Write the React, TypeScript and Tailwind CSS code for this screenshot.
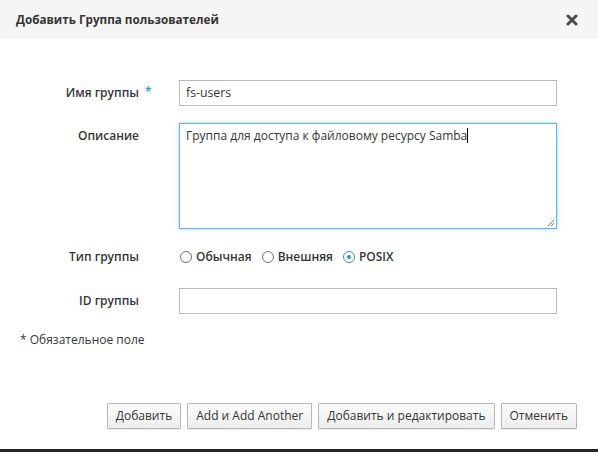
import React from "react";

const font = { fontFamily: '"Open Sans", "Noto Sans", sans-serif' };

function Radio({ checked, label }: { checked?: boolean; label: string }) {
  return (
    <div className="flex items-center gap-[4px]">
      <span
        className={
          "w-[12px] h-[12px] rounded-full border-[1.5px] flex items-center justify-center bg-white " +
          (checked ? "border-[#3a8fc8]" : "border-[#707070]")
        }
      >
        {checked && <span className="w-[4px] h-[4px] rounded-full bg-[#3a8fc8]" />}
      </span>
      <span className="text-[12px] font-semibold text-[#363636]">{label}</span>
    </div>
  );
}

function Btn({ children }: { children: React.ReactNode }) {
  return (
    <button className="h-[26px] px-[8px] border border-[#b7b7b7] bg-gradient-to-b from-[#fafafa] to-[#ededed] text-[12px] text-[#363636] rounded-[1px] shadow-[0_1px_1px_rgba(0,0,0,0.08)]">
      {children}
    </button>
  );
}

export default function App() {
  return (
    <div className="w-[598px] h-[452px] bg-white flex flex-col relative overflow-hidden" style={font}>
      <div className="h-[39px] bg-[#f5f5f5] flex items-center justify-between pl-[16px] pr-[20px] shrink-0">
        <span className="text-[11.7px] font-bold text-[#363636]">Добавить Группа пользователей</span>
        <svg width="12" height="12" viewBox="0 0 12 12">
          <path d="M2 2 L10 10 M10 2 L2 10" stroke="#4d4d4d" strokeWidth="3" strokeLinecap="round" />
        </svg>
      </div>

      <div className="flex flex-col pt-[41px] pr-[41px]">
        <div className="grid grid-cols-[139px_1fr] gap-x-[40px] items-center">
          <div className="relative text-right text-[12px] font-semibold text-[#363636]">
            Имя группы
            <span className="absolute left-[145px] -top-[1px] text-[#39a5dc] font-bold">*</span>
          </div>
          <div className="h-[26px] border border-[#bbbbbb] flex items-center px-[6px] text-[12.3px] text-[#363636]">
            fs-users
          </div>
        </div>

        <div className="grid grid-cols-[139px_1fr] gap-x-[40px] items-start mt-[17px]">
          <div className="text-right text-[12px] font-semibold text-[#363636] pt-[4px]">Описание</div>
          <div className="relative h-[106px] border border-[#66afe9] shadow-[0_0_4px_rgba(102,175,233,0.6)] px-[6px] pt-[3px] text-[12px] leading-[18px] text-[#363636]">
            Группа для доступа к файловому ресурсу Samba
            <span className="inline-block w-[1px] h-[15px] bg-black align-[-3px]" />
            <svg className="absolute right-[1px] bottom-[1px]" width="8" height="8" viewBox="0 0 8 8">
              <path d="M7 1 L1 7 M7 4 L4 7" stroke="#777" strokeWidth="1" />
            </svg>
          </div>
        </div>

        <div className="grid grid-cols-[139px_1fr] gap-x-[40px] items-center mt-[15px] h-[26px]">
          <div className="text-right text-[12px] font-semibold text-[#363636]">Тип группы</div>
          <div className="flex items-center gap-[10px] pl-[1px]">
            <Radio label="Обычная" />
            <Radio label="Внешняя" />
            <Radio label="POSIX" checked />
          </div>
        </div>

        <div className="grid grid-cols-[139px_1fr] gap-x-[40px] items-center mt-[18px]">
          <div className="text-right text-[12px] font-semibold text-[#363636]">ID группы</div>
          <div className="h-[26px] border border-[#bbbbbb]" />
        </div>

        <div className="pl-[20px] mt-[17px] text-[12px] text-[#363636]">* Обязательное поле</div>
      </div>

      <div className="flex justify-end gap-[6px] pr-[21px] mt-auto mb-[20px]">
        <Btn>Добавить</Btn>
        <Btn>Add и Add Another</Btn>
        <Btn>Добавить и редактировать</Btn>
        <Btn>Отменить</Btn>
      </div>
      <div className="h-[3px] bg-[#262626] shrink-0" />
    </div>
  );
}
